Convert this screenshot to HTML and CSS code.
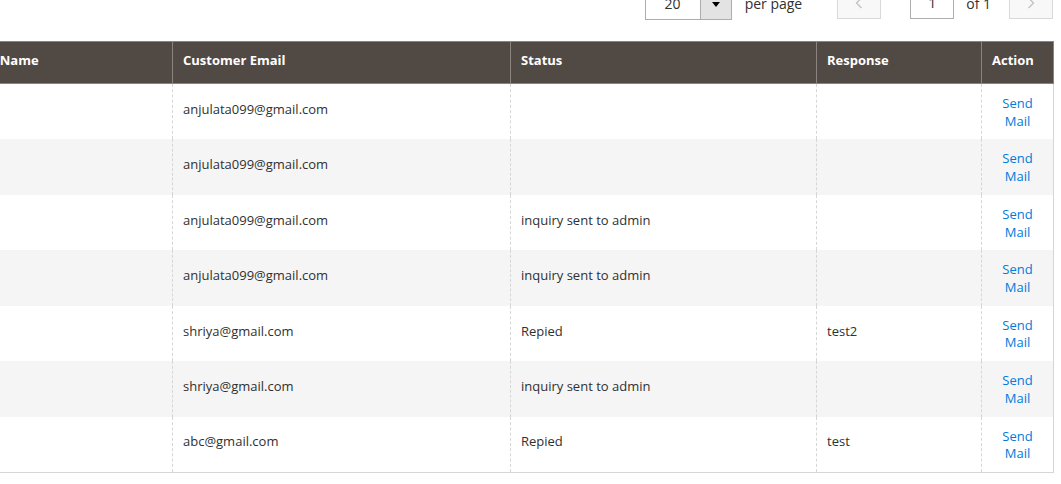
FILE: index.html
```html
<!DOCTYPE html>
<html>
<head>
<meta charset="utf-8">
<link rel="stylesheet" href="styles.css">
</head>
<body>
<div class="page">
  <div class="pager">
    <div class="select">
      <span class="select-value">20</span>
      <span class="select-btn"><span class="tri"></span></span>
    </div>
    <span class="per-page">per page</span>
    <button class="nav-btn prev" aria-label="Previous">
      <svg width="8" height="12" viewBox="0 0 8 12"><path d="M6.5 1 L1.5 6 L6.5 11" fill="none" stroke="#c2c2c2" stroke-width="1.3"/></svg>
    </button>
    <span class="page-input">1</span>
    <span class="of">of 1</span>
    <button class="nav-btn next" aria-label="Next">
      <svg width="8" height="12" viewBox="0 0 8 12"><path d="M1.5 1 L6.5 6 L1.5 11" fill="none" stroke="#c2c2c2" stroke-width="1.3"/></svg>
    </button>
  </div>
  <table class="grid">
    <colgroup>
      <col class="c-name"><col class="c-email"><col class="c-status"><col class="c-resp"><col class="c-action">
    </colgroup>
    <thead>
      <tr><th>Customer Name</th><th>Customer Email</th><th>Status</th><th>Response</th><th>Action</th></tr>
    </thead>
    <tbody>
      <tr><td></td><td>anjulata099@gmail.com</td><td></td><td></td><td class="act"><a href="#">Send Mail</a></td></tr>
      <tr class="alt"><td></td><td>anjulata099@gmail.com</td><td></td><td></td><td class="act"><a href="#">Send Mail</a></td></tr>
      <tr><td></td><td>anjulata099@gmail.com</td><td>inquiry sent to admin</td><td></td><td class="act"><a href="#">Send Mail</a></td></tr>
      <tr class="alt"><td></td><td>anjulata099@gmail.com</td><td>inquiry sent to admin</td><td></td><td class="act"><a href="#">Send Mail</a></td></tr>
      <tr><td></td><td>shriya@gmail.com</td><td>Repied</td><td>test2</td><td class="act"><a href="#">Send Mail</a></td></tr>
      <tr class="alt"><td></td><td>shriya@gmail.com</td><td>inquiry sent to admin</td><td></td><td class="act"><a href="#">Send Mail</a></td></tr>
      <tr><td></td><td>abc@gmail.com</td><td>Repied</td><td>test</td><td class="act"><a href="#">Send Mail</a></td></tr>
    </tbody>
  </table>
</div>
</body>
</html>
```

FILE: styles.css
```css
html, body {
  margin: 0;
  padding: 0;
  background: #fff;
  overflow: hidden;
}
body {
  font-family: "Open Sans", "Liberation Sans", sans-serif;
  color: #303030;
  width: 1061px;
  height: 484px;
}
.page {
  padding-right: 8px;
}
.pager {
  display: flex;
  justify-content: flex-end;
  align-items: center;
  height: 32px;
  margin-top: -12px;
  font-size: 14px;
}
.select {
  display: flex;
  height: 32px;
  box-sizing: border-box;
  border: 1px solid #adadad;
  width: 87px;
}
.select-value {
  width: 54px;
  text-align: center;
  line-height: 30px;
  background: #fff;
}
.select-btn {
  flex: 1;
  background: #e3e3e3;
  border-left: 1px solid #adadad;
  display: flex;
  align-items: center;
  justify-content: center;
}
.tri {
  width: 0;
  height: 0;
  border-left: 4px solid transparent;
  border-right: 4px solid transparent;
  border-top: 5px solid #000;
}
.per-page {
  margin-left: 13px;
  line-height: 32px;
}
.nav-btn {
  width: 44px;
  height: 32px;
  box-sizing: border-box;
  background: #f8f8f8;
  border: 1px solid #d9d9d9;
  margin: 0;
  padding: 0;
  display: flex;
  align-items: center;
  justify-content: center;
  position: relative;
  top: -1px;
}
.prev {
  margin-left: 35px;
}
.page-input {
  margin-left: 29px;
  width: 44px;
  height: 32px;
  box-sizing: border-box;
  border: 1px solid #adadad;
  text-align: center;
  line-height: 30px;
  position: relative;
  top: -1px;
}
.of {
  margin-left: 12px;
  line-height: 32px;
}
.next {
  margin-left: 18px;
}
.grid {
  margin-top: 21px;
  margin-left: -78px;
  border-collapse: collapse;
  table-layout: fixed;
  width: 1131px;
  font-size: 13px;
}
.c-name { width: 250px; }
.c-email { width: 338px; }
.c-status { width: 306px; }
.c-resp { width: 165px; }
.c-action { width: 72px; }
.grid th {
  background: #514943;
  color: #fff;
  font-weight: 700;
  text-align: left;
  border: 1px solid #8a837f;
  padding: 10px 10px 14px 10px;
  line-height: 17px;
  height: 17px;
}
.grid td {
  padding: 8px 10px 12px;
  line-height: 17.72px;
  vertical-align: middle;
  border-left: 1px dashed #d6d6d6;
  border-right: 1px dashed #d6d6d6;
  height: 35.44px;
}
.grid tr.alt td {
  background: #f5f5f5;
}
.grid td:last-child {
  border-right: 1px solid #d6d6d6;
}
.grid tbody tr:last-child td {
  border-bottom: 1px solid #d6d6d6;
}
.grid td.act {
  text-align: center;
  padding-top: 11px;
  padding-bottom: 9px;
}
.grid a {
  color: #007bdb;
  text-decoration: none;
}
```
